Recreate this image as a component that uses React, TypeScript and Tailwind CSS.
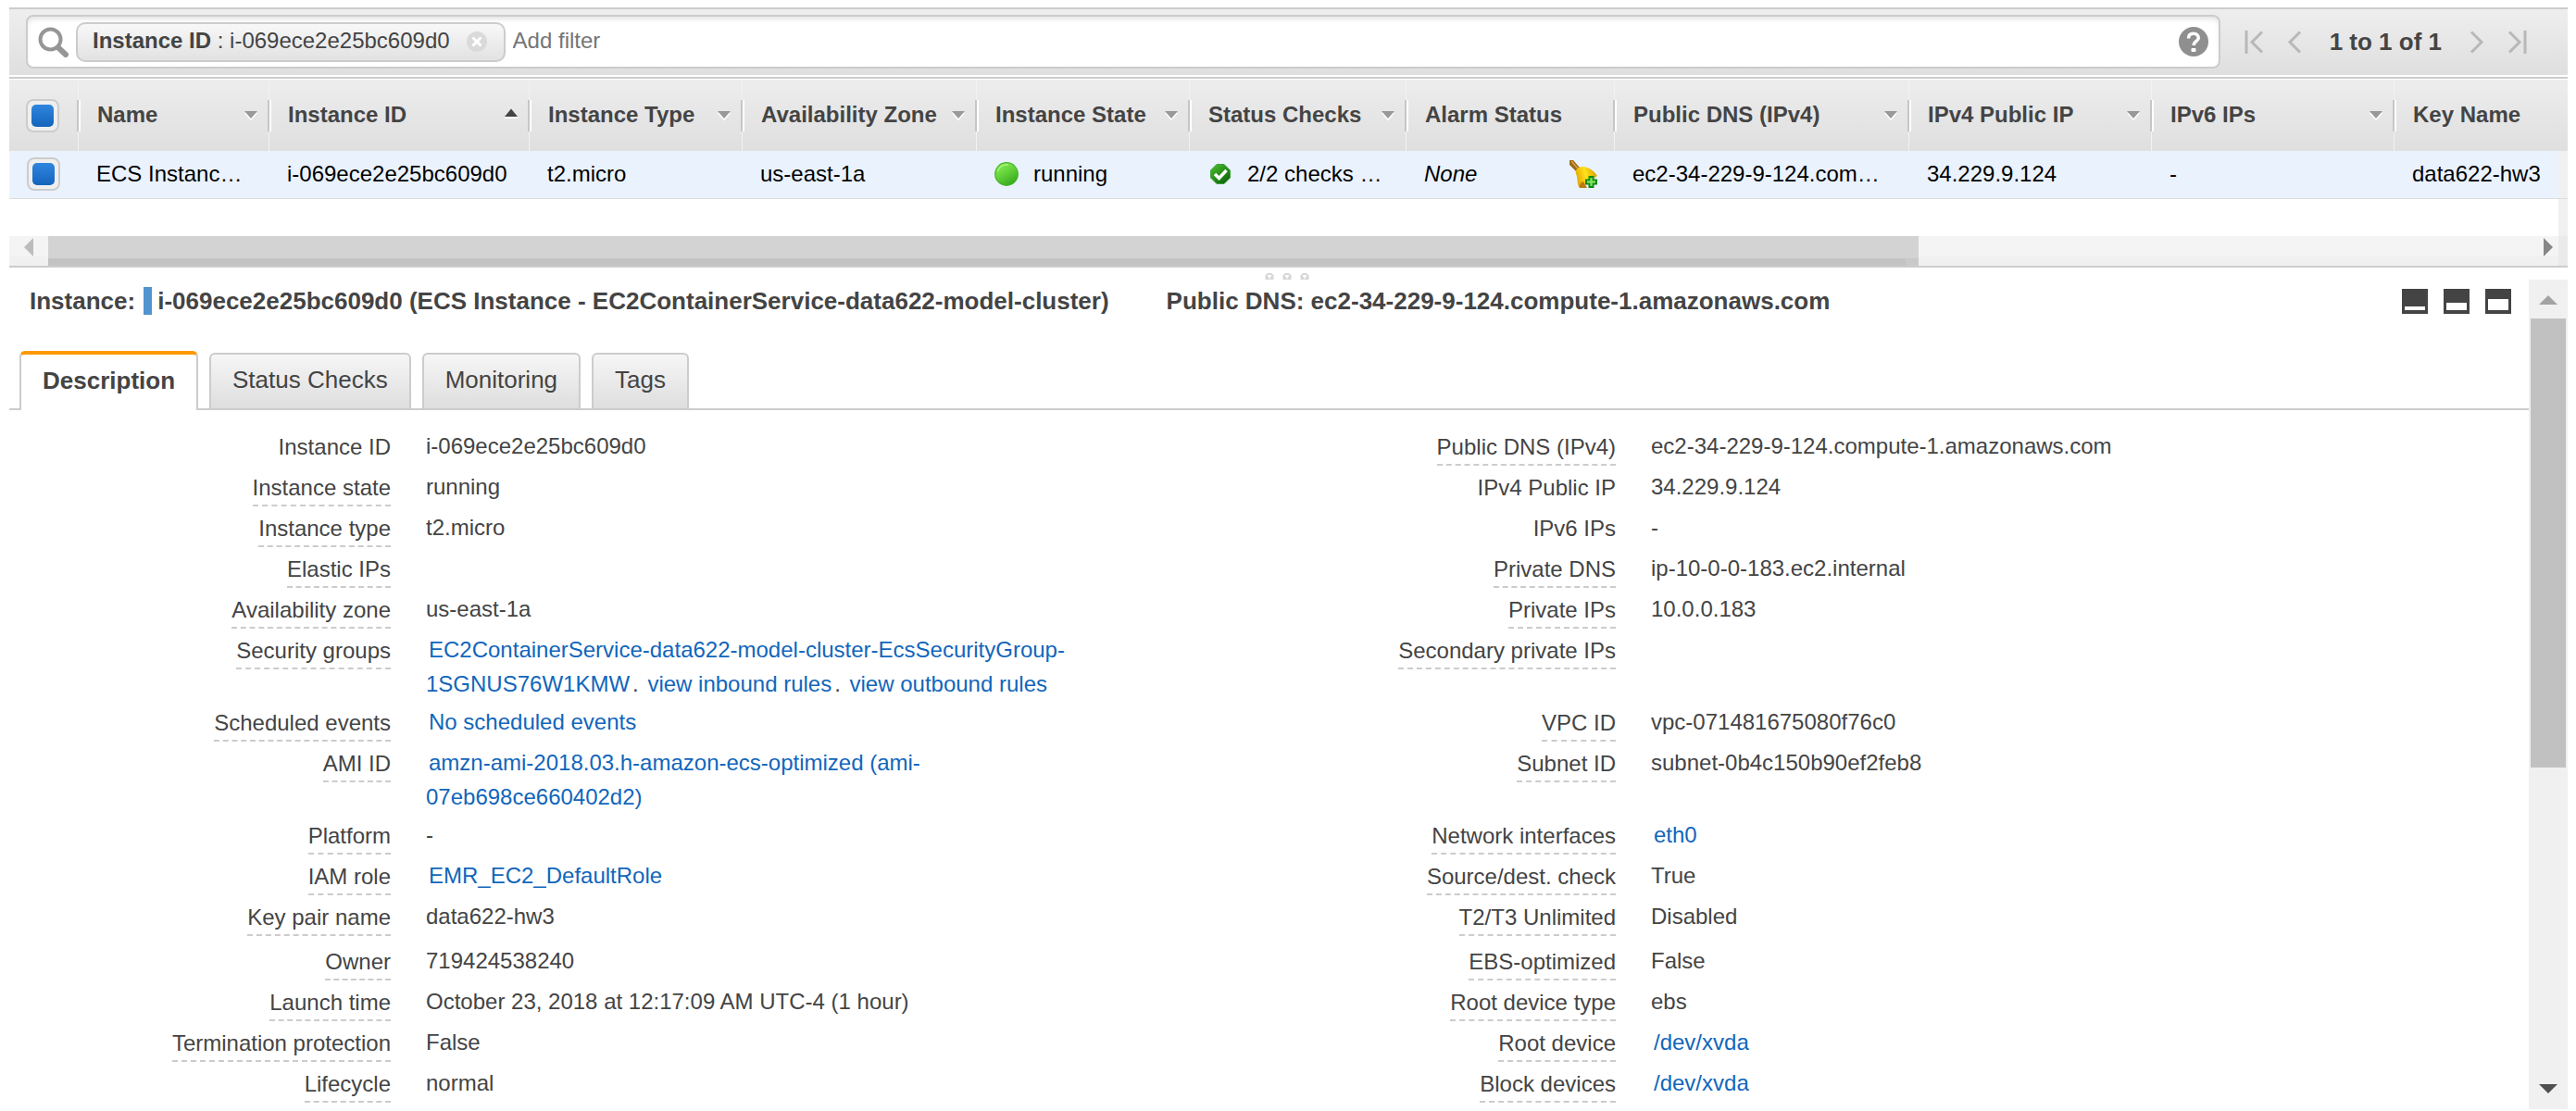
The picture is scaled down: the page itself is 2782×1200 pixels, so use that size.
import React from "react";

function SearchIcon() {
  return (
    <svg viewBox="0 0 33 33" className="size-[33px] shrink-0" fill="none" stroke="#969696" aria-hidden="true">
      <circle cx="13.5" cy="13.5" r="11" strokeWidth="4" />
      <path d="M22 22.500L30 30" strokeWidth="6" strokeLinecap="round" />
    </svg>
  );
}

function HelpIcon() {
  return (
    <svg viewBox="0 0 32 32" className="size-8" aria-hidden="true">
      <circle cx="16" cy="16" r="16" fill="#8f8f8f" />
      <path d="M10.500 12.500C10.500 8.500 13 7.300 16 7.300S21.300 9 21.300 12C21.300 15.500 16.200 15.500 16.200 20" fill="none" stroke="#fff" strokeWidth="3.600" />
      <rect x="13.500" y="23" width="5" height="4" rx="1" fill="#fff" />
    </svg>
  );
}

function ClearIcon() {
  return (
    <svg viewBox="0 0 22 22" className="size-[22px]" aria-hidden="true">
      <circle cx="11" cy="11" r="11" fill="#dadada" />
      <path d="M6.500 6.500L15.500 15.500M15.500 6.500L6.500 15.500" stroke="#fff" strokeWidth="3" />
    </svg>
  );
}

function PagerIcon({ kind }: { kind: "first" | "prev" | "next" | "last" }) {
  const paths = {
    first: "M2 0V25M19 1.500L8 12.500L19 23.500",
    prev: "M16 1.500L5 12.500L16 23.500",
    next: "M4 1.500L15 12.500L4 23.500",
    last: "M18 0V25M1 1.500L12 12.500L1 23.500",
  };
  return (
    <svg viewBox="0 0 20 25" className="h-[25px] w-5" fill="none" stroke="#b8b8b8" strokeWidth="3" aria-hidden="true">
      <path d={paths[kind]} />
    </svg>
  );
}

function RunningIcon() {
  return (
    <svg viewBox="0 0 26 26" className="size-[26px] shrink-0" aria-hidden="true">
      <defs>
        <linearGradient id="ball" x1="0.2" y1="0" x2="0.8" y2="1">
          <stop offset="0" stopColor="#8aee52" />
          <stop offset="0.5" stopColor="#5fce36" />
          <stop offset="1" stopColor="#2fa41c" />
        </linearGradient>
      </defs>
      <circle cx="13" cy="13" r="12.300" fill="url(#ball)" stroke="#46b52a" strokeWidth="1.200" />
      <path d="M3.500 10A10 10 0 0 1 15 3" fill="none" stroke="#b5f58c" strokeWidth="1.200" />
    </svg>
  );
}

function CheckIcon() {
  return (
    <svg viewBox="0 0 22 22" className="size-[22px] shrink-0" aria-hidden="true">
      <defs>
        <linearGradient id="badge" x1="0" y1="0" x2="0.8" y2="1">
          <stop offset="0" stopColor="#4cc32f" />
          <stop offset="1" stopColor="#0a6408" />
        </linearGradient>
      </defs>
      <path d="M7 0.500H15L21.500 7V15L15 21.500H7L0.500 15V7Z" fill="url(#badge)" stroke="#3f9f38" strokeWidth="1" strokeLinejoin="round" />
      <path d="M5 11L9.500 15.500L17.500 7" fill="none" stroke="#fff" strokeWidth="3.400" />
    </svg>
  );
}

function BellAddIcon() {
  return (
    <svg viewBox="0 0 30 30" className="size-[30px]" aria-hidden="true">
      <defs>
        <linearGradient id="bell" x1="0" y1="0.6" x2="1" y2="0.3">
          <stop offset="0" stopColor="#e2a400" />
          <stop offset="0.5" stopColor="#ffe11c" />
          <stop offset="1" stopColor="#d99a00" />
        </linearGradient>
      </defs>
      <path d="M0 0H4L11 8L7 12L0 5Z" fill="#9c6a12" />
      <path d="M2 1L9 9" stroke="#d2a24c" strokeWidth="1.500" />
      <path d="M7 11C9 7 14 6 19 8C23 9.500 27 12 30 17L11 30C8 26 9 22 8 18C7.500 15 6 13.500 7 11Z" fill="url(#bell)" />
      <path d="M11 30C10 27 12 24 15 23L19 30Z" fill="#b97b12" />
      <path d="M20.500 17H26.500V20.500H30V26.500H26.500V30H20.500V26.500H17V20.500H20.500Z" fill="#0b8a12" />
      <path d="M23.500 19V28M19 23.500H28" stroke="#7ee05e" strokeWidth="2.400" />
    </svg>
  );
}

function SortIcon({ ascending }: { ascending?: boolean }) {
  return ascending ? (
    <svg viewBox="0 0 14 12" className="mb-1 h-3 w-3.5 shrink-0" aria-hidden="true">
      <path d="M0 8.500H14V11H0Z" fill="#fff" />
      <path d="M7 0.500L14 9H0Z" fill="#444" />
    </svg>
  ) : (
    <svg viewBox="0 0 14 12" className="h-3 w-3.5 shrink-0" aria-hidden="true">
      <path d="M0 3L7 11.500L14 3Z" fill="#fff" />
      <path d="M0 1H14L7 9Z" fill="#999" />
    </svg>
  );
}

function PaneIcon({ top }: { top: number }) {
  return (
    <svg viewBox="0 0 28 27" className="h-[27px] w-7" aria-hidden="true">
      <rect width="28" height="27" fill="#444" />
      <rect x="3" y={top} width="22" height={23 - top} fill="#fff" />
    </svg>
  );
}

function GripIcon() {
  return (
    <svg viewBox="0 0 10 8" className="h-2 w-2.5" aria-hidden="true">
      <path d="M0.500 8V3.500L3 1H7L9.500 3.500V8Z" fill="#d6d6d6" />
      <path d="M2.500 3H7.500L5 7.500Z" fill="#fff" />
    </svg>
  );
}

function Arrow({ d, fill, box = "0 0 20 10", className }: { d: string; fill: string; box?: string; className: string }) {
  return (
    <svg viewBox={box} className={className} aria-hidden="true">
      <path d={d} fill={fill} />
    </svg>
  );
}

function Tick({ label }: { label: string }) {
  return (
    <input
      type="checkbox"
      defaultChecked
      aria-label={label}
      className="grid size-9 appearance-none place-content-center rounded-lg border-2 border-[#ccc] bg-[#efefef] before:size-6 before:rounded-[5px] checked:before:bg-linear-to-b checked:before:from-[#2f86df] checked:before:to-[#1464bb]"
    />
  );
}

const columns: { name: string; width: string; sort?: "asc" | "none" }[] = [
  { name: "Name", width: "w-[206px]", sort: "none" },
  { name: "Instance ID", width: "w-[281px]", sort: "asc" },
  { name: "Instance Type", width: "w-[230px]", sort: "none" },
  { name: "Availability Zone", width: "w-[253px]", sort: "none" },
  { name: "Instance State", width: "w-[230px]", sort: "none" },
  { name: "Status Checks", width: "w-[234px]", sort: "none" },
  { name: "Alarm Status", width: "w-[225px]" },
  { name: "Public DNS (IPv4)", width: "w-[318px]", sort: "none" },
  { name: "IPv4 Public IP", width: "w-[262px]", sort: "none" },
  { name: "IPv6 IPs", width: "w-[262px]", sort: "none" },
  { name: "Key Name", width: "w-auto" },
];

function Toolbar() {
  return (
    <div className="flex items-center border-t-2 border-[#ccc] bg-linear-to-b from-[#eeeeee] to-[#dfdfdf] pt-1.5 pr-11 pb-[7px] pl-[18px]">
      <div className="flex h-[58px] grow items-center rounded-lg border-2 border-[#ccc] bg-white px-[11px] shadow-[inset_0_4px_6px_-2px_#ddd]">
        <SearchIcon />
        <div className="ml-2 flex h-[43px] items-center rounded-[10px] border-2 border-[#ccc] bg-linear-to-b from-[#f8f8f8] to-[#e2e2e2] pr-[18px] pl-4 whitespace-pre">
          <span className="pb-0.5">
            <b>Instance ID</b> : i-069ece2e25bc609d0
          </span>
          <button type="button" aria-label="Remove filter" className="ml-[18px]">
            <ClearIcon />
          </button>
        </div>
        <input
          type="text"
          aria-label="Add filter"
          placeholder="Add filter"
          className="ml-2 min-w-0 grow bg-transparent pb-0.5 outline-none placeholder:text-[#757575]"
        />
        <button type="button" aria-label="Help">
          <HelpIcon />
        </button>
      </div>
      <nav aria-label="Pages" className="ml-[26px] flex items-center text-[26px]">
        <button type="button" aria-label="First page">
          <PagerIcon kind="first" />
        </button>
        <button type="button" aria-label="Previous page" className="ml-6">
          <PagerIcon kind="prev" />
        </button>
        <b className="mx-7 whitespace-nowrap">1 to 1 of 1</b>
        <button type="button" aria-label="Next page">
          <PagerIcon kind="next" />
        </button>
        <button type="button" aria-label="Last page" className="ml-6">
          <PagerIcon kind="last" />
        </button>
      </nav>
    </div>
  );
}

function InstanceTable() {
  const cell = "truncate pl-5";
  return (
    <table className="w-full table-fixed border-collapse">
      <thead>
        <tr className="h-[77px] bg-linear-to-b from-[#ededed] to-[#dfdfdf]">
          <th className="w-[74px] pl-[18px] text-left align-middle">
            <div className="flex">
              <Tick label="Select all instances" />
            </div>
          </th>
          {columns.map((c) => (
            <th key={c.name} className={`relative h-[77px] p-0 text-left align-middle ${c.width}`}>
              <div className="flex h-full items-center justify-between border-l border-[#f2f2f2] pr-3 pl-5">
                <span className="absolute inset-y-0 -left-px my-auto h-[34px] border-r-2 border-l-2 border-r-white border-l-[#c6c6c6]" />
                <span className="pb-0.5 whitespace-nowrap">{c.name}</span>
                {c.sort && <SortIcon ascending={c.sort === "asc"} />}
              </div>
            </th>
          ))}
          <th className="w-2.5" />
        </tr>
      </thead>
      <tbody className="text-black">
        <tr className="h-[51px] border-b border-[#dcdcdc] bg-[#eaf2fe]">
          <td className="pl-[19px]">
            <div className="flex">
              <Tick label="Select i-069ece2e25bc609d0" />
            </div>
          </td>
          <td className={cell}>ECS Instanc…</td>
          <td className={cell}>i-069ece2e25bc609d0</td>
          <td className={cell}>t2.micro</td>
          <td className={cell}>us-east-1a</td>
          <td className={cell}>
            <div className="flex items-center gap-4">
              <RunningIcon />
              running
            </div>
          </td>
          <td className={cell}>
            <div className="flex items-center gap-[18px] pl-[3px]">
              <CheckIcon />
              2/2 checks …
            </div>
          </td>
          <td className="pr-[18px] pl-5">
            <div className="flex items-center justify-between">
              <i>None</i>
              <button type="button" aria-label="Add alarm">
                <BellAddIcon />
              </button>
            </div>
          </td>
          <td className={cell}>ec2-34-229-9-124.com…</td>
          <td className={cell}>34.229.9.124</td>
          <td className={cell}>-</td>
          <td className={cell}>data622-hw3</td>
          <td className="bg-[#f0f0f0]" />
        </tr>
        <tr className="h-[41px]">
          <td colSpan={12} />
          <td className="bg-[#f0f0f0]" />
        </tr>
      </tbody>
    </table>
  );
}

function HorizontalScrollbar() {
  return (
    <div className="flex h-[34px] border-b-2 border-[#ccc] bg-[#eaeaea] pr-2.5">
      <div className="flex grow bg-linear-to-b from-[#f4f4f4] from-70% to-[#f0f0f0] to-70%">
        <button type="button" aria-label="Scroll left" className="flex w-[42px] items-start pt-0.5 pl-4">
          <Arrow box="0 0 10 20" d="M10 0V20L0 10Z" fill="#bcbcbc" className="h-5 w-2.5" />
        </button>
        <div className="grow-[2006] bg-linear-to-b from-[#d3d3d3] from-75% to-[#c9c9c9] to-75%">
          <div className="mr-3.5 h-full bg-linear-to-b from-transparent from-75% to-[#c3c3c3] to-75%" />
        </div>
        <div className="grow-[664]" />
        <button type="button" aria-label="Scroll right" className="flex w-[27px] items-start pt-0.5 pl-[11px]">
          <Arrow box="0 0 10 20" d="M0 0V20L10 10Z" fill="#868686" className="h-5 w-2.5" />
        </button>
      </div>
    </div>
  );
}

function Link({ children }: { children: React.ReactNode }) {
  return (
    <a href="#" className="px-[3px] text-[#1166bb]">
      {children}
    </a>
  );
}

type Field = { label: string; value?: React.ReactNode; plain?: boolean };

const upperFields: [Field, Field][] = [
  [
    { label: "Instance ID", value: "i-069ece2e25bc609d0", plain: true },
    { label: "Public DNS (IPv4)", value: "ec2-34-229-9-124.compute-1.amazonaws.com" },
  ],
  [
    { label: "Instance state", value: "running" },
    { label: "IPv4 Public IP", value: "34.229.9.124", plain: true },
  ],
  [
    { label: "Instance type", value: "t2.micro" },
    { label: "IPv6 IPs", value: "-", plain: true },
  ],
  [{ label: "Elastic IPs" }, { label: "Private DNS", value: "ip-10-0-0-183.ec2.internal" }],
  [
    { label: "Availability zone", value: "us-east-1a" },
    { label: "Private IPs", value: "10.0.0.183" },
  ],
  [
    {
      label: "Security groups",
      value: (
        <>
          <Link>EC2ContainerService-data622-model-cluster-EcsSecurityGroup-1SGNUS76W1KMW</Link>. <Link>view inbound rules</Link>.{" "}
          <Link>view outbound rules</Link>
        </>
      ),
    },
    { label: "Secondary private IPs" },
  ],
  [
    { label: "Scheduled events", value: <Link>No scheduled events</Link> },
    { label: "VPC ID", value: "vpc-071481675080f76c0" },
  ],
  [
    { label: "AMI ID", value: <Link>amzn-ami-2018.03.h-amazon-ecs-optimized (ami-07eb698ce660402d2)</Link> },
    { label: "Subnet ID", value: "subnet-0b4c150b90ef2feb8" },
  ],
  [
    { label: "Platform", value: "-" },
    { label: "Network interfaces", value: <Link>eth0</Link> },
  ],
  [
    { label: "IAM role", value: <Link>EMR_EC2_DefaultRole</Link> },
    { label: "Source/dest. check", value: "True" },
  ],
  [
    { label: "Key pair name", value: "data622-hw3" },
    { label: "T2/T3 Unlimited", value: "Disabled" },
  ],
];

const lowerFields: [Field, Field][] = [
  [
    { label: "Owner", value: "719424538240" },
    { label: "EBS-optimized", value: "False" },
  ],
  [
    { label: "Launch time", value: "October 23, 2018 at 12:17:09 AM UTC-4 (1 hour)" },
    { label: "Root device type", value: "ebs" },
  ],
  [
    { label: "Termination protection", value: "False" },
    { label: "Root device", value: <Link>/dev/xvda</Link> },
  ],
  [
    { label: "Lifecycle", value: "normal" },
    { label: "Block devices", value: <Link>/dev/xvda</Link> },
  ],
];

function FieldRows({ rows }: { rows: [Field, Field][] }) {
  return (
    <dl className="flex flex-col gap-1 pr-[75px]">
      {rows.map((pair) => (
        <div key={pair[0].label} className="grid grid-cols-2">
          {pair.map((f) => (
            <div key={f.label} className="flex items-start gap-[38px]">
              <dt className="flex w-[412px] shrink-0 justify-end">
                <span
                  className={`h-10 border-b-2 leading-[40px] whitespace-nowrap ${
                    f.plain ? "border-transparent" : "border-dashed border-[#ccc]"
                  }`}
                >
                  {f.label}
                </span>
              </dt>
              <dd className="max-w-[740px] leading-[37px]">{f.value}</dd>
            </div>
          ))}
        </div>
      ))}
    </dl>
  );
}

function Tabs() {
  return (
    <div role="tablist" className="mt-[39px] flex items-end gap-3 border-b-2 border-[#ccc] pl-[11px] text-[26px]">
      <button
        type="button"
        role="tab"
        aria-selected="true"
        className="-mb-0.5 h-16 rounded-t-md border-x-2 border-t-4 border-[#ccc] border-t-[#f90] bg-white px-[23px] pb-1 font-bold"
      >
        Description
      </button>
      {["Status Checks", "Monitoring", "Tags"].map((t) => (
        <button
          key={t}
          type="button"
          role="tab"
          aria-selected="false"
          className="h-[60px] rounded-t-md border-x-2 border-t-2 border-[#ccc] bg-linear-to-b from-[#f6f6f6] to-[#dedede] px-[23px] pb-1"
        >
          {t}
        </button>
      ))}
    </div>
  );
}

function DetailPane() {
  return (
    <section className="flex">
      <div className="grow">
        <header className="mt-2 flex h-[30px] items-center pr-[19px] pl-[22px] text-[26px] font-bold whitespace-nowrap">
          <h2>Instance:</h2>
          <span className="mr-1.5 ml-[9px] h-[30px] w-[9px] bg-[#5294cf]" />
          <h2>i-069ece2e25bc609d0 (ECS Instance - EC2ContainerService-data622-model-cluster)</h2>
          <h2 className="ml-[62px]">Public DNS: ec2-34-229-9-124.compute-1.amazonaws.com</h2>
          <div className="ml-auto flex gap-[17px]">
            <button type="button" aria-label="Minimise details">
              <PaneIcon top={19} />
            </button>
            <button type="button" aria-label="Split view">
              <PaneIcon top={15} />
            </button>
            <button type="button" aria-label="Maximise details">
              <PaneIcon top={11} />
            </button>
          </div>
        </header>
        <Tabs />
        <div className="flex flex-col gap-2 pt-5 pb-[7px]">
          <FieldRows rows={upperFields} />
          <FieldRows rows={lowerFields} />
        </div>
      </div>
      <div className="flex w-[42px] shrink-0 flex-col bg-[#f0f0f0] px-0.5">
        <button type="button" aria-label="Scroll up" className="flex h-[42px] items-start justify-center pt-[17px]">
          <Arrow d="M10 0L20 10H0Z" fill="#a3a3a3" className="h-2.5 w-5" />
        </button>
        <div className="grow-[485] bg-[#c1c1c1]" />
        <div className="grow-[327]" />
        <button type="button" aria-label="Scroll down" className="flex h-[42px] items-end justify-center pb-[17px]">
          <Arrow d="M0 0H20L10 10Z" fill="#505050" className="h-2.5 w-5" />
        </button>
      </div>
    </section>
  );
}

export default function App() {
  return (
    <main className="bg-white pt-2 pr-[9px] pl-2.5 font-['Liberation_Sans',Arial,sans-serif] text-[24px] leading-8 text-[#444]">
      <Toolbar />
      <div className="mt-0.5 border-t-2 border-[#ccc] pt-px">
        <InstanceTable />
      </div>
      <HorizontalScrollbar />
      <div className="flex h-[13px] items-end justify-center gap-[9px] pr-1">
        <GripIcon />
        <GripIcon />
        <GripIcon />
      </div>
      <DetailPane />
    </main>
  );
}
